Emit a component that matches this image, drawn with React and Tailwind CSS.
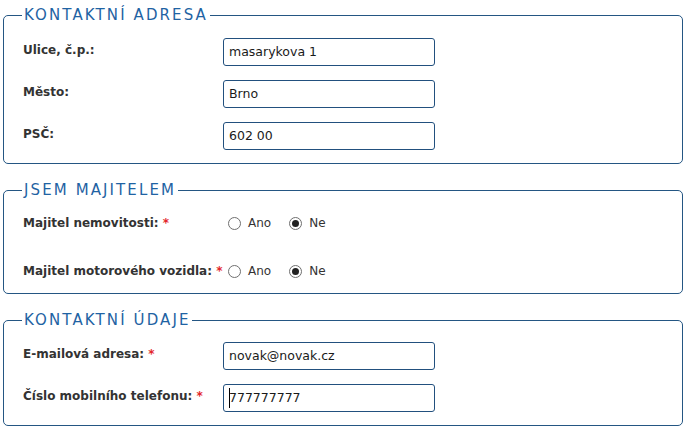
import React from "react";

const font = "font-['DejaVu_Sans',Verdana,sans-serif]";

function Legend({ children }) {
  return (
    <legend className="ml-[18px] px-[2px] text-[15px] leading-[20px] tracking-[2.1px] text-[#1f63a3]">
      {children}
    </legend>
  );
}

function Req() {
  return <span className="text-[#e3262a]"> *</span>;
}

function Label({ children, required }) {
  return (
    <div className="w-[200px] shrink-0 whitespace-nowrap pt-[4px] text-[12px] leading-[16px] font-bold text-[#333]">
      {children}
      {required && <Req />}
    </div>
  );
}

function TextBox({ value, caret }) {
  return (
    <div className="relative flex h-[28px] w-[212px] items-center rounded-[3px] border border-[#22507e] bg-white px-[5px] text-[12.5px] text-[#1a1a1a]">
      {caret && <span className="absolute left-[5px] top-[3px] h-[20px] w-[1px] bg-black" />}
      {value}
    </div>
  );
}

function Radio({ checked, label }) {
  return (
    <div className="flex items-center">
      <span className="flex h-[13px] w-[13px] items-center justify-center rounded-full border border-[#6f6f6f] bg-white">
        {checked && <span className="h-[7px] w-[7px] rounded-full bg-[#222]" />}
      </span>
      <span className="ml-[7px] text-[12px] leading-[16px] text-[#333]">{label}</span>
    </div>
  );
}

function RadioRow({ label }) {
  return (
    <div className="flex items-center">
      <div className="w-[200px] shrink-0 whitespace-nowrap text-[12px] leading-[16px] font-bold text-[#333]">
        {label}
        <Req />
      </div>
      <div className="ml-[5px] flex items-center gap-[18px]">
        <Radio label="Ano" />
        <Radio checked label="Ne" />
      </div>
    </div>
  );
}

function Row({ label, value, required, caret }) {
  return (
    <div className="flex items-start">
      <Label required={required}>{label}</Label>
      <TextBox value={value} caret={caret} />
    </div>
  );
}

export default function App() {
  return (
    <div className={`${font} min-h-[434px] w-[688px] bg-white pt-[5px] pl-[3px]`}>
      <fieldset className="w-[680px] rounded-[5px] border border-[#245683] pb-[13px]">
        <Legend>KONTAKTNÍ ADRESA</Legend>
        <div className="flex flex-col gap-[14px] pt-[13px] pl-[19px]">
          <Row label="Ulice, č.p.:" value="masarykova 1" />
          <Row label="Město:" value="Brno" />
          <Row label="PSČ:" value="602 00" />
        </div>
      </fieldset>

      <fieldset className="mt-[16px] w-[680px] rounded-[5px] border border-[#245683] pb-[14px]">
        <Legend>JSEM MAJITELEM</Legend>
        <div className="flex flex-col gap-[32px] pt-[15px] pl-[19px]">
          <RadioRow label="Majitel nemovitosti:" />
          <RadioRow label="Majitel motorového vozidla:" />
        </div>
      </fieldset>

      <fieldset className="mt-[16px] w-[680px] rounded-[5px] border border-[#245683] pb-[13px]">
        <Legend>KONTAKTNÍ ÚDAJE</Legend>
        <div className="flex flex-col gap-[14px] pt-[12px] pl-[19px]">
          <Row label="E-mailová adresa:" value="novak@novak.cz" required />
          <Row label="Číslo mobilního telefonu:" value="777777777" required caret />
        </div>
      </fieldset>
    </div>
  );
}
